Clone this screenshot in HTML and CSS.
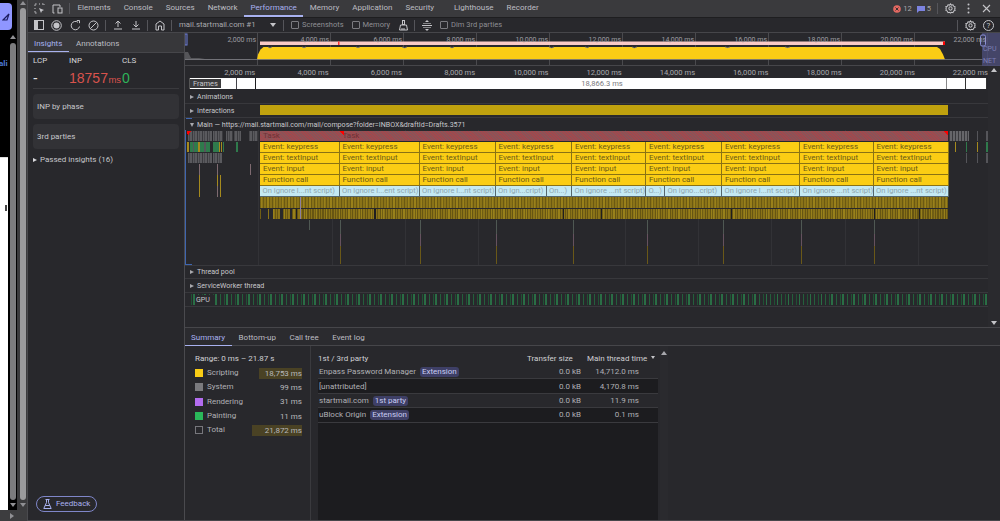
FILE: index.html
```html
<!DOCTYPE html>
<html lang="en">
<head>
<meta charset="utf-8">
<title>DevTools Performance</title>
<link rel="stylesheet" href="styles.css">
</head>
<body>
<div class="app">
  <aside class="strip">
    <div class="strip-main">
      <div class="pagecol">
        <div class="logo"><svg width="8" height="10" viewBox="0 0 8 10"><path d="M1 8 7 2 5 8Z" fill="none" stroke="#1c1c60" stroke-width="1.2"/></svg></div>
        <div class="pagedark"><span class="ali">ali</span></div>
        <div class="pagewhite"><i class="mark"></i></div>
      </div>
      <div class="innerbar"><i class="arrow-up"></i><div class="thumb"></div><i class="arrow-down"></i></div>
      <div class="outerbar"><i class="arrow-up"></i><div class="thumb"></div><i class="arrow-down"></i></div>
    </div>
    <div class="strip-foot"><i class="arrow-right"></i></div>
  </aside>

  <div class="devtools">
    <header class="tabbar">
      <svg class="ico first" width="11" height="11" viewBox="0 0 11 11" fill="none" stroke="#c4c4c8"><path d="M1 3V1h2M5 1h1M8 1h2v1M1 5v1M1 8v2h2" stroke-dasharray="1.5 .6"/><path d="M5 5 10 7 8 8 7 10Z" fill="#c4c4c8" stroke="none"/></svg>
      <svg class="ico dev" width="11" height="10" viewBox="0 0 11 10" fill="none" stroke="#c4c4c8"><path d="M2.500 9H1V1h7v2"/><rect x="6" y="4" width="4" height="5"/></svg>
      <span class="vr"></span>
      <nav class="tabs">
        <span class="tab">Elements</span><span class="tab">Console</span><span class="tab">Sources</span><span class="tab">Network</span><span class="tab active">Performance</span><span class="tab">Memory</span><span class="tab">Application</span><span class="tab">Security</span><span class="tab lh">Lighthouse</span><span class="tab">Recorder</span>
      </nav>
      <div class="status">
        <svg width="8" height="8" viewBox="0 0 8 8"><circle cx="4" cy="4" r="3.800" fill="#e46962"/><path d="M2.500 2.500l3 3m0-3l-3 3" stroke="#2a2a2c" stroke-width=".9"/></svg>
        <span class="cnt">12</span>
        <svg class="msg" width="8" height="8" viewBox="0 0 8 8"><path d="M0 1h8v5H2L0 8Z" fill="#7c83e0"/></svg>
        <span class="cnt">5</span>
        <span class="vr vr-status"></span>
        <svg class="gear" width="11" height="11" viewBox="0 0 12 12" fill="none" stroke="#c4c4c8" stroke-width="1.100"><circle cx="6" cy="6" r="1.800"/><path d="M6 1l1 1.300 1.700-.4.700 1.600 1.600.7-.4 1.700L11 6l-.4 1.100.4 1.100-1.600.7-.7 1.600-1.700-.4L6 11l-1-.9-1.700.4-.7-1.600-1.600-.7.4-1.700L1 6l.4-1.100L1 3.800l1.600-.3.700-1.600 1.700.4Z"/></svg>
        <svg class="dots" width="3" height="11" viewBox="0 0 3 11" fill="#c4c4c8"><circle cx="1.500" cy="1.500" r="1"/><circle cx="1.500" cy="5.500" r="1"/><circle cx="1.500" cy="9.500" r="1"/></svg>
        <svg class="close" width="9" height="9" viewBox="0 0 9 9" stroke="#c4c4c8" stroke-width="1.100"><path d="M1 1l7 7m0-7L1 8"/></svg>
      </div>
    </header>

    <div class="toolbar">
      <svg class="ti" width="10" height="10" viewBox="0 0 10 10" fill="none" stroke="#c4c4c8"><rect x=".5" y=".5" width="9" height="9"/><rect x="1" y="1" width="3" height="8" fill="#c4c4c8" stroke="none"/></svg>
      <svg class="ti ti8" width="11" height="11" viewBox="0 0 11 11"><circle cx="5.500" cy="5.500" r="4.800" fill="none" stroke="#c4c4c8"/><circle cx="5.500" cy="5.500" r="3" fill="#c4c4c8"/></svg>
      <svg class="ti" width="11" height="11" viewBox="0 0 11 11" fill="none" stroke="#c4c4c8"><path d="M9.500 6.500A4.200 4.200 0 1 1 8 2.300"/><path d="M6.800 .5H9.500V3.200" /></svg>
      <svg class="ti ti6" width="11" height="11" viewBox="0 0 11 11" fill="none" stroke="#c4c4c8"><circle cx="5.500" cy="5.500" r="4.500"/><path d="M2.300 8.700l6.400-6.400"/></svg>
      <span class="vr"></span>
      <svg class="ti ti8" width="10" height="10" viewBox="0 0 10 10" fill="none" stroke="#c4c4c8"><path d="M5 7V1M2.500 3.500 5 1l2.500 2.500M1 9h8"/></svg>
      <svg class="ti ti6" width="10" height="10" viewBox="0 0 10 10" fill="none" stroke="#c4c4c8"><path d="M5 1v6M2.500 4.500 5 7l2.500-2.500M1 9h8"/></svg>
      <span class="vr"></span>
      <svg class="ti ti6" width="10" height="11" viewBox="0 0 10 11" fill="none" stroke="#c4c4c8"><path d="M1 10V4l4-3 4 3v6H6.500V6h-3v4Z"/></svg>
      <span class="vr"></span>
      <span class="target">mail.startmail.com #1</span>
      <i class="caret"></i>
      <span class="vr"></span>
      <label class="chk shots"><i class="box"></i>Screenshots</label>
      <label class="chk"><i class="box"></i>Memory</label>
      <svg class="broom" width="11" height="11" viewBox="0 0 11 11" fill="none" stroke="#c4c4c8"><rect x="4.500" y=".5" width="2" height="4"/><path d="M2.500 5h6l1 5h-8ZM4 8v2M6 8v2"/></svg>
      <span class="vr"></span>
      <svg class="cap" width="10" height="11" viewBox="0 0 10 11" stroke="#c4c4c8" fill="#c4c4c8"><path d="M0 5.500h10" /><path d="M5 0 7 2H3ZM5 11 3 9h4Z" stroke="none"/><path d="M1 3.500h8M1 7.500h8" stroke-width=".6"/></svg>
      <label class="chk dim"><i class="box"></i>Dim 3rd parties</label>
      <div class="tool-right">
        <span class="vr"></span>
        <svg class="gear2" width="11" height="11" viewBox="0 0 12 12" fill="none" stroke="#c4c4c8" stroke-width="1.100"><circle cx="6" cy="6" r="1.800"/><path d="M6 1l1 1.300 1.700-.4.700 1.600 1.600.7-.4 1.700L11 6l-.4 1.100.4 1.100-1.600.7-.7 1.600-1.700-.4L6 11l-1-.9-1.700.4-.7-1.600-1.600-.7.4-1.700L1 6l.4-1.100L1 3.800l1.600-.3.700-1.600 1.700.4Z"/></svg>
        <span class="help">?</span>
      </div>
    </div>

    <div class="body">
      <aside class="sidebar">
        <div class="side-tabs"><span class="stab active">Insights</span><span class="stab">Annotations</span></div>
        <div class="metrics">
          <div class="metric m-lcp"><span class="mlabel">LCP</span><span class="mval dash">-</span></div>
          <div class="metric m-inp"><span class="mlabel">INP</span><span class="mval red">18757<small>ms</small></span></div>
          <div class="metric m-cls"><span class="mlabel">CLS</span><span class="mval green">0</span></div>
        </div>
        <div class="card">INP by phase</div>
        <div class="card">3rd parties</div>
        <div class="passed"><i class="tri"></i>Passed insights (16)</div>
        <div class="feedback-wrap">
          <span class="feedback"><svg width="9" height="10" viewBox="0 0 9 10" fill="none" stroke="#a8b1ef"><path d="M2.500 .5h4M3.500 .5v3L.8 9.500h7.400L5.500 3.500v-3M2.200 6.500h4.600"/></svg>Feedback</span>
        </div>
      </aside>

      <main class="main">
        <section class="timeline">
          <div class="timeline-scroll">
            <div class="overview">
              <div class="ov-labels">
                <span>2,000 ms</span><span>4,000 ms</span><span>6,000 ms</span><span>8,000 ms</span><span>10,000 ms</span><span>12,000 ms</span><span>14,000 ms</span><span>16,000 ms</span><span>18,000 ms</span><span>20,000 ms</span><span>22,000 ms</span>
              </div>
              <svg class="ov-art" width="815" height="33" viewBox="0 0 815 33">
                <path d="M0 19h3l3 6h8l6 1h45v1H0Z" fill="#555559"/>
                <path d="M72 26.500l1-5 2.500-5 3-2.500H752l3 2 3 5.500 2 5Z" fill="#facc15"/>
                <path d="M0 26.500H798" stroke="#7a7a80" stroke-width=".8"/>
                <rect x="75" y="8.500" width="685" height="3.500" fill="#f9c9c5"/>
                <rect x="153" y="8.500" width="1.500" height="3.500" fill="#f33"/>
                <rect x="758" y="8.500" width="2" height="3.500" fill="#f00"/>
                <path d="M83 14q2 2 4 0M117 14q2 1.500 4 0M171 14q2 1.500 4 0M217 14q3 2 5 0M265 14q2 2 4 0M364 14q3 2 5 0M400 14q3 1.500 4 0M447 14q2 2 5 0M540 14q3 1.500 5 0M600 14q3 1.500 5 0" stroke="#8a8a8e" fill="#33302a" stroke-width=".6"/>
                <rect x="0" y="1" width="2" height="11" fill="none" stroke="#6f7fd8"/>
                <rect x="797" y="0" width="18" height="33" fill="#4d4f7c" opacity=".75"/>
                <rect x="795.500" y="2" width="5" height="11" rx="1.500" fill="#3a3b55" stroke="#8a90d8"/>
              </svg>
              <span class="ov-cpu">CPU</span><span class="ov-net">NET</span>
            </div>
            <div class="ruler">
              <span>2,000 ms</span><span>4,000 ms</span><span>6,000 ms</span><span>8,000 ms</span><span>10,000 ms</span><span>12,000 ms</span><span>14,000 ms</span><span>16,000 ms</span><span>18,000 ms</span><span>20,000 ms</span><span>22,000 ms</span>
            </div>
            <div class="frames">
              <span class="frames-label">Frames</span>
              <div class="frames-mid">18,866.3 ms</div>
            </div>
            <div class="track t-anim"><i class="tri"></i>Animations</div>
            <div class="track t-int"><i class="tri"></i>Interactions<div class="int-bar"></div></div>
            <div class="track t-main"><i class="tri-d"></i>Main — https://mail.startmail.com/mail/compose?folder=INBOX&amp;draftId=Drafts.3571</div>
            <div class="flame">
              <div class="row r-task"><span class="c task w1">Task</span><span class="c task w2">Task</span></div>
              <div class="row">
                <span class="c y" style="width:79.5px">Event: keypress</span><span class="c y" style="width:80px">Event: keypress</span><span class="c y" style="width:76px">Event: keypress</span><span class="c y" style="width:76.500px">Event: keypress</span><span class="c y" style="width:74px">Event: keypress</span><span class="c y" style="width:76px">Event: keypress</span><span class="c y" style="width:78px">Event: keypress</span><span class="c y" style="width:73.500px">Event: keypress</span><span class="c y" style="width:75px">Event: keypress</span>
              </div>
              <div class="row">
                <span class="c y" style="width:79.5px">Event: textInput</span><span class="c y" style="width:80px">Event: textInput</span><span class="c y" style="width:76px">Event: textInput</span><span class="c y" style="width:76.500px">Event: textInput</span><span class="c y" style="width:74px">Event: textInput</span><span class="c y" style="width:76px">Event: textInput</span><span class="c y" style="width:78px">Event: textInput</span><span class="c y" style="width:73.500px">Event: textInput</span><span class="c y" style="width:75px">Event: textInput</span>
              </div>
              <div class="row">
                <span class="c y" style="width:79.5px">Event: input</span><span class="c y" style="width:80px">Event: input</span><span class="c y" style="width:76px">Event: input</span><span class="c y" style="width:76.500px">Event: input</span><span class="c y" style="width:74px">Event: input</span><span class="c y" style="width:76px">Event: input</span><span class="c y" style="width:78px">Event: input</span><span class="c y" style="width:73.500px">Event: input</span><span class="c y" style="width:75px">Event: input</span>
              </div>
              <div class="row">
                <span class="c y" style="width:79.5px">Function call</span><span class="c y" style="width:80px">Function call</span><span class="c y" style="width:76px">Function call</span><span class="c y" style="width:76.500px">Function call</span><span class="c y" style="width:74px">Function call</span><span class="c y" style="width:76px">Function call</span><span class="c y" style="width:78px">Function call</span><span class="c y" style="width:73.500px">Function call</span><span class="c y" style="width:75px">Function call</span>
              </div>
              <div class="row">
                <span class="c b" style="width:79.5px">On ignore l...nt script)</span><span class="c b" style="width:80px">On ignore l...ent script)</span><span class="c b" style="width:76px">On ignore l...nt script)</span><span class="c b" style="width:51px">On ign...cript)</span><span class="c b" style="width:25.500px">On...)</span><span class="c b" style="width:74px">On ignore ...nt script)</span><span class="c b" style="width:19px">O...)</span><span class="c b" style="width:57px">On igno...cript)</span><span class="c b" style="width:78px">On ignore l...nt script)</span><span class="c b" style="width:73.500px">On ignore ...nt script)</span><span class="c b" style="width:75px">On ignore ...nt script)</span>
              </div>
              <div class="row r-stripe s1"></div>
              <div class="row r-stripe s2"></div>
              <svg class="flame-art" width="803" height="134" viewBox="0 0 803 134" shape-rendering="crispEdges">
                <defs>
                  <pattern id="noise" width="5" height="10" patternUnits="userSpaceOnUse"><rect width="5" height="10" fill="#5a5a5e"/><rect x="1" width="1" height="10" fill="#3a3a3e"/><rect x="3" width="1" height="10" fill="#47474b"/></pattern>
                  <pattern id="tail" width="3" height="10" patternUnits="userSpaceOnUse"><rect width="3" height="10" fill="#66666a"/><rect x="1" width="1" height="10" fill="#3a3a3e"/></pattern>
                </defs>
                <g fill="url(#noise)"><rect x="2" y="0" width="24" height="10"/><rect x="27" y="0" width="10" height="10"/><rect x="40" y="0" width="7" height="10"/><rect x="48" y="0" width="7" height="10"/><rect x="63" y="0" width="9" height="10"/><rect x="2" y="22" width="24" height="10"/><rect x="27" y="22" width="9" height="10"/></g>
                <g fill="url(#tail)"><rect x="763" y="0" width="20" height="10"/></g>
                <g fill="#55555a"><rect x="791" y="0" width="1" height="10"/><rect x="800" y="0" width="2" height="10"/><rect x="791" y="22" width="1" height="10"/><rect x="800" y="22" width="2" height="10"/><rect x="780" y="22" width="1" height="10"/></g>
                <path d="M1 0h4L2 5Z" fill="#f00"/>
                <path d="M153 0h5l0 5Z" fill="#f00"/>
                <path d="M757 0h5v5Z" fill="#f00"/>
                <g fill="#2f7a4c"><rect x="4" y="11" width="20" height="10"/><rect x="27" y="11" width="6" height="10"/><rect x="50" y="11" width="2" height="10"/><rect x="37" y="11" width="1" height="10"/><rect x="800" y="11" width="2" height="10"/><rect x="780" y="11" width="1" height="10"/></g>
                <g fill="#55555a"><rect x="7" y="11" width="1" height="10"/><rect x="12" y="11" width="1" height="10"/><rect x="18" y="11" width="2" height="10"/></g>
                <g fill="#a58a1e"><rect x="1" y="11" width="2" height="10"/><rect x="12" y="11" width="2" height="10"/><rect x="33" y="11" width="1" height="10"/><rect x="35" y="11" width="1" height="10"/><rect x="13" y="44" width="1" height="22"/><rect x="31" y="44" width="1" height="11"/><rect x="34" y="44" width="1" height="22"/><rect x="769" y="11" width="1" height="10"/><rect x="791" y="11" width="1" height="10"/></g>
                <g fill="#7e6a70"><rect x="13" y="33" width="1" height="11"/><rect x="31" y="33" width="1" height="11"/><rect x="64" y="33" width="1" height="11"/><rect x="31" y="55" width="1" height="11"/></g>
                <g fill="#1e1e20"><rect x="188" y="78" width="2" height="10"/><rect x="377" y="78" width="1" height="10"/><rect x="415" y="78" width="1" height="10"/><rect x="545" y="78" width="1" height="10"/><rect x="688" y="78" width="1" height="10"/><rect x="733" y="78" width="1" height="10"/><rect x="110" y="78" width="1" height="10"/></g>
                <g fill="#28282c"><rect x="75" y="78" width="7" height="10"/><rect x="83" y="78" width="4" height="10"/><rect x="94" y="78" width="3" height="10"/><rect x="104" y="78" width="2" height="10"/></g>
                <g fill="#8c7fa0"><rect x="114" y="66" width="1" height="22"/></g>
                <g id="ticks">
                  <g fill="#4f5853"><rect x="154" y="89" width="1" height="14"/><rect x="234" y="89" width="1" height="14"/><rect x="310" y="89" width="1" height="14"/><rect x="387" y="89" width="1" height="14"/><rect x="461" y="89" width="1" height="14"/><rect x="537" y="89" width="1" height="14"/><rect x="615" y="89" width="1" height="14"/><rect x="688" y="89" width="1" height="14"/><rect x="123" y="89" width="1" height="10"/></g>
                  <g fill="#66525f"><rect x="154" y="103" width="1" height="12"/><rect x="234" y="103" width="1" height="12"/><rect x="310" y="103" width="1" height="12"/><rect x="387" y="103" width="1" height="12"/><rect x="461" y="103" width="1" height="12"/><rect x="537" y="103" width="1" height="12"/><rect x="615" y="103" width="1" height="12"/><rect x="688" y="103" width="1" height="12"/></g>
                  <g fill="#6a5818"><rect x="154" y="115" width="1" height="18"/><rect x="234" y="115" width="1" height="18"/><rect x="310" y="115" width="1" height="18"/><rect x="387" y="115" width="1" height="18"/><rect x="461" y="115" width="1" height="18"/><rect x="537" y="115" width="1" height="18"/><rect x="615" y="115" width="1" height="18"/><rect x="688" y="115" width="1" height="18"/></g>
                </g>
              </svg>
            </div>
            <div class="track t-pool"><i class="tri"></i>Thread pool</div>
            <div class="track t-sw"><i class="tri"></i>ServiceWorker thread</div>
            <div class="track t-gpu"><span class="gpu-label">GPU</span></div>
          </div>
          <div class="vscroll"><i class="arrow-up"></i><i class="arrow-down"></i></div>
        </section>

        <section class="details">
          <div class="dtabs"><span class="dtab active">Summary</span><span class="dtab">Bottom-up</span><span class="dtab">Call tree</span><span class="dtab">Event log</span></div>
          <div class="dbody">
            <div class="summary">
              <div class="range">Range: 0 ms – 21.87 s</div>
              <div class="sline"><i class="sw sw-y"></i><span>Scripting</span><b class="sv bar1">18,753 ms</b></div>
              <div class="sline"><i class="sw sw-g"></i><span>System</span><b class="sv">99 ms</b></div>
              <div class="sline"><i class="sw sw-p"></i><span>Rendering</span><b class="sv">31 ms</b></div>
              <div class="sline"><i class="sw sw-n"></i><span>Painting</span><b class="sv">11 ms</b></div>
              <div class="sline"><i class="sw sw-t"></i><span>Total</span><b class="sv bar2">21,872 ms</b></div>
            </div>
            <div class="tablewrap">
              <div class="thead"><span class="c1">1st / 3rd party</span><span class="c2">Transfer size</span><span class="c3">Main thread time<i class="caret small"></i></span></div>
              <div class="trow"><span class="c1">Enpass Password Manager <em>Extension</em></span><span class="c2">0.0 kB</span><span class="c3">14,712.0 ms</span></div>
              <div class="trow"><span class="c1">[unattributed]</span><span class="c2">0.0 kB</span><span class="c3">4,170.8 ms</span></div>
              <div class="trow"><span class="c1">startmail.com <em>1st party</em></span><span class="c2">0.0 kB</span><span class="c3">11.9 ms</span></div>
              <div class="trow"><span class="c1">uBlock Origin <em>Extension</em></span><span class="c2">0.0 kB</span><span class="c3">0.1 ms</span></div>
            </div>
            <div class="tscroll"><i class="arrow-up"></i></div>
          </div>
        </section>
      </main>
    </div>
  </div>
</div>
</body>
</html>
```

FILE: styles.css
```css
* { box-sizing: border-box; }
html, body { margin: 0; height: 100%; overflow: hidden; background: #28282b; }
body { font: 8px/10px Roboto, "Noto Sans", sans-serif; color: #c7c7cb; }
svg { display: block; flex: none; }
i { display: block; font-style: normal; }
em { font-style: normal; }

.app { display: flex; width: 1000px; height: 521px; }

/* Left page remnant */
.strip { width: 28px; flex: none; display: flex; flex-direction: column; border-right: 1px solid #4a4a4e; background: #3b3b3d; }
.strip-main { flex: 1; display: flex; min-height: 0; }
.strip-foot { height: 11px; background: #3d3d3f; display: flex; align-items: center; padding-left: 10px; }
.pagecol { width: 8px; display: flex; flex-direction: column; background: #000; }
.logo { width: 12px; height: 27px; margin-top: 3px; background: #8f96ff; border-radius: 0 4px 4px 0; display: flex; align-items: center; justify-content: center; position: relative; z-index: 1; }
.pagedark { height: 127px; padding-top: 29px; overflow: visible; }
.ali { color: #4d7bd6; font-weight: 700; font-size: 8px; margin-left: -1px; }
.pagewhite { flex: 1; background: #fff; border-top: 1px solid #ddd; padding: 47px 0 0 5px; }
.mark { width: 2px; height: 6px; background: #444; }
.innerbar { width: 9px; background: #000; display: flex; flex-direction: column; align-items: center; padding: 35px 0 3px; margin-right: 2px; position: relative; }
.innerbar .thumb { flex: 1; width: 6px; margin: 4px 0 3px; background: #7c7c7e; border-radius: 3px; }
.outerbar { width: 8px; display: flex; flex-direction: column; align-items: center; padding: 1px 0 3px; }
.outerbar .thumb { flex: 1; width: 6px; margin: 3px 0; background: #9a9a9c; border-radius: 3px; }
.arrow-up { width: 0; height: 0; border: 3px solid transparent; border-top: 0; border-bottom: 4px solid #909094; flex: none; }
.arrow-down { width: 0; height: 0; border: 3px solid transparent; border-bottom: 0; border-top: 4px solid #909094; flex: none; }
.arrow-right { width: 0; height: 0; border: 3px solid transparent; border-right: 0; border-left: 4px solid #909094; }

/* DevTools shell */
.devtools { flex: 1; min-width: 0; display: flex; flex-direction: column; border-bottom: 1px solid #46464a; }
.tabbar { height: 17px; flex: none; background: #3a3a3d; display: flex; align-items: center; padding-left: 6px; }
.ico.dev { margin-left: 7px; }
.vr { width: 1px; height: 11px; background: #55555a; flex: none; }
.tabbar > .vr { margin: 0 1px 0 6px; }
.tabs { display: flex; align-self: stretch; }
.tab { padding: 3px 6.500px 0; height: 17px; color: #bdbdc2; white-space: nowrap; border-bottom: 2px solid transparent; }
.tab.active { color: #a8b1ef; border-bottom-color: #a8b1ef; }
.tab.lh { margin-left: 7px; }
.status { margin-left: auto; display: flex; align-items: center; padding-right: 9px; }
.cnt { margin-left: 2px; color: #a8a8ad; font-size: 7.500px; }
.msg { margin-left: 5px; }
.status .vr-status { margin-left: 6px; }
.gear { margin-left: 7px; }
.dots { margin-left: 11px; }
.close { margin-left: 12px; }

.toolbar { height: 16px; flex: none; background: #28282c; border-top: 1px solid #1e1e20; border-bottom: 1px solid #46464a; display: flex; align-items: center; padding-left: 6px; }
.ti { margin-right: 7px; }
.ti8 { margin-right: 8px; }
.ti6 { margin-right: 6px; }
.toolbar > .vr { margin-right: 7px; margin-left: 0; }
.target { color: #a8a8ad; width: 91px; white-space: nowrap; font-size: 7.800px; }
.caret { width: 0; height: 0; border: 3px solid transparent; border-bottom: 0; border-top: 4px solid #c4c4c8; flex: none; margin-right: 7px; }
.caret.small { display: inline-block; border-width: 2.500px; border-bottom: 0; border-top-width: 3px; margin: 0 0 1px 3px; border-top-color: #c4c4c8; vertical-align: middle; }
.chk { display: flex; align-items: center; color: #8e8e93; white-space: nowrap; margin-right: 8px; font-size: 7.500px; }
.box { width: 8px; height: 8px; border: 1px solid #7a7a7f; border-radius: 1px; margin-right: 3px; }
.broom { margin-right: 5px; }
.cap { margin-right: 8px; }
.dim { margin-right: 0; }
.tool-right { margin-left: auto; display: flex; align-items: center; padding-right: 6px; }
.gear2 { margin-left: 7px; }
.help { width: 11px; height: 11px; border: 1px solid #c4c4c8; border-radius: 50%; margin-left: 7px; font-size: 8px; line-height: 9px; text-align: center; color: #c4c4c8; }

.body { flex: 1; display: flex; min-height: 0; }

/* Sidebar */
.sidebar { width: 157px; flex: none; border-right: 1px solid #4a4a4e; background: #28282c; display: flex; flex-direction: column; }
.side-tabs { height: 20px; background: #37373a; display: flex; border-bottom: 1px solid #46464a; }
.stab { padding: 6px 7px 0 6px; height: 19px; color: #bdbdc2; white-space: nowrap; margin-right: 1px; }
.stab.active { color: #a8b1ef; border-bottom: 1px solid #a8b1ef; width: 41px; padding-left: 6px; margin-right: 0; }
.stab + .stab { padding-left: 7px; }
.metrics { display: flex; height: 36px; margin: 0 5px; border-bottom: 1px solid #3a3a3e; padding-top: 3px; }
.metric { display: flex; flex-direction: column; }
.m-lcp { width: 36px; padding-left: 0; }
.m-inp { width: 53px; }
.mlabel { color: #d6d6da; height: 10px; font-size: 8px; }
.mval { margin-top: 5px; font: 14px/15px "Liberation Sans", sans-serif; white-space: nowrap; }
.mval small { font-size: 9.500px; margin-left: .5px; }
.dash { color: #e0e0e4; }
.red { color: #d9534c; }
.green { color: #2fb35a; }
.card { height: 25px; margin: 5px 5px 0; padding-left: 4px; line-height: 25px; border-radius: 4px; background: #323236; color: #c7c7cb; }
.card + .card { margin-top: 5px; }
.passed { display: flex; align-items: center; margin: 6px 0 0 5px; height: 10px; color: #c7c7cb; }
.tri { width: 0; height: 0; border: 2.500px solid transparent; border-right: 0; border-left: 4px solid #a8a8ad; margin-right: 3px; flex: none; }
.passed .tri { border-left-color: #d8d8dc; margin-right: 3px; }
.tri-d { width: 0; height: 0; border: 2.500px solid transparent; border-bottom: 0; border-top: 4px solid #a8a8ad; margin-right: 3px; flex: none; }
.feedback-wrap { margin-top: auto; padding: 0 0 8px 8px; }
.feedback { display: inline-flex; align-items: center; height: 16px; width: 61px; padding-left: 6px; border: 1px solid #7f86c9; border-radius: 8px; color: #a8b1ef; gap: 4px; }

/* Main column */
.main { flex: 1; min-width: 0; display: flex; flex-direction: column; background: #28282c; }
.timeline { height: 295px; flex: none; display: flex; position: relative; border-bottom: 1px solid #46464a; }
.timeline-scroll { flex: 1; min-width: 0; display: flex; flex-direction: column; }
.vscroll { position: absolute; right: 0; top: 33px; bottom: 0; width: 12px; display: flex; flex-direction: column; justify-content: space-between; align-items: center; padding: 3px 0 2px; background: #2a2a2e; }
.vscroll .arrow-up { border-bottom-color: #c4c4c8; margin-top: -1px; }
.vscroll .arrow-down { border-top-color: #c4c4c8; }

.overview { height: 33px; flex: none; position: relative; border-bottom: 1px solid #46464a;
  background: repeating-linear-gradient(90deg, transparent 0 72px, #4a4a4e 72px 73px); }
.ov-labels { display: flex; position: relative; z-index: 1; }
.ov-labels span { width: 73px; flex: none; text-align: right; padding: 2px 2px 0 0; font-size: 7px; color: #9c9ca1; white-space: nowrap; }
.ov-art { position: absolute; left: 0; top: 0; }
.ov-cpu, .ov-net { position: absolute; left: 798px; color: #7d7fb5; font-size: 7px; }
.ov-cpu { top: 11px; }
.ov-net { top: 23px; }

.ruler { height: 12px; flex: none; display: flex; background: #28282c; padding-top: 1px; }
.ruler span { width: 73.300px; flex: none; text-align: right; color: #a8a8ad; padding-right: 3px; line-height: 11px; white-space: nowrap; overflow: hidden; font-size: 7.600px; }
.ruler span:last-child { width: 70px; padding-right: 0; }

.frames { height: 11px; flex: none; position: relative; margin-right: 13px; margin-left: 4px;
  background: linear-gradient(90deg, #555 0 1px, #fff 1px 47px, #44444a 47px 48px, #fff 48px 66px, #1e1e20 66px 67px, #fff 67px 757px, #888 757px 758px, #fff 758px 776px, #333 776px 777px, #fff 777px 797px, #333 797px); }
.frames-label { position: absolute; left: 1px; top: 1px; height: 9px; padding: 0 2px 0 3px; line-height: 9px; background: #3c3c3e; color: #c7c7cb; width: 31px; font-size: 7.500px; }
.frames-mid { color: #7a7a7e; text-align: center; line-height: 11px; padding-left: 28px; font-size: 7.600px; }

.track { display: flex; align-items: center; padding-left: 5px; border-bottom: 1px solid #38383c; position: relative; flex: none; color: #c7c7cb; white-space: nowrap; font-size: 7.100px; }
.t-anim { height: 15px; padding-top: 1px; }
.t-int { height: 14px; padding-top: 1px; }
.t-main { height: 12px; border-bottom: 0; padding-top: 2px; }
.t-pool { height: 14px; border-top: 1px solid #38383c; }
.t-sw { height: 14px; }
.t-gpu { height: 14px; }
.int-bar { position: absolute; left: 75px; width: 688px; top: 1px; height: 10px; background: #c0a20e; }

.flame { height: 135px; flex: none; position: relative; padding-left: 74px; padding-top: 1px; border-left: 1px solid #3f66b0;
  background: repeating-linear-gradient(90deg, transparent 0 72.300px, #323236 72.300px 73.300px); }
.flame::before, .flame::after { content: ""; position: absolute; left: 0; width: 6px; height: 1px; background: #3f66b0; }
.flame::before { top: -12px; }
.flame::after { bottom: 0; }
.row { display: flex; height: 11px; width: 688px; }
.c { flex: none; height: 11px; padding-left: 3px; line-height: 10px; white-space: nowrap; overflow: hidden; border-right: 1px solid #8a7214; border-bottom: 1px solid #8a7214; }
.y { background: #fbcd14; color: #6b5a14; }
.b { background: #c4e9f3; color: #8fa6ae; border-color: #55666c; font-size: 7.600px; padding-left: 2.500px; }
.task { height: 11px; border: 0; border-bottom: 1px solid #28282c; color: #6e3236; background: repeating-linear-gradient(45deg, #a5474c 0 1px, #86565a 1px 2px); }
.w1 { width: 79.500px; border-right: 0; }
.w2 { width: 608.500px; }
.r-stripe { height: 11px; background-color: #8a7318; }
.s1 { background-image: repeating-linear-gradient(90deg, rgba(60,50,10,.4) 0 1px, transparent 1px 3px), repeating-linear-gradient(90deg, rgba(190,160,30,.3) 0 2px, transparent 2px 7px); }
.s2 { background-image: repeating-linear-gradient(90deg, rgba(50,40,10,.4) 0 1px, transparent 1px 2.500px), repeating-linear-gradient(90deg, rgba(170,145,30,.45) 0 3px, transparent 3px 11px); border-top: 1px solid #28282c; }
.flame-art { position: absolute; left: 0; top: 1px; pointer-events: none; }

.t-gpu { background: repeating-linear-gradient(90deg, #24603c 0 1px, transparent 1px 4px, #1f5234 4px 5px, transparent 5px 6.500px, #2a6e45 6.500px 8px, transparent 8px 11px) 2px 0 / 800px 100% no-repeat; background-clip: content-box; padding-top: 1px; padding-bottom: 1px; }
.gpu-label { background: #28282c; padding: 0 4px 0 0; margin-left: 6px; }

/* Details */
.details { flex: 1; min-height: 0; display: flex; flex-direction: column; }
.dtabs { height: 18px; flex: none; display: flex; background: #2b2b2f; border-bottom: 1px solid #46464a; }
.dtab { padding: 5px 7px 0 6.500px; height: 18px; color: #bdbdc2; white-space: nowrap; }
.dtab.active { color: #a8b1ef; border-bottom: 1px solid #a8b1ef; padding-left: 6px; }
.dbody { flex: 1; min-height: 0; display: flex; }
.summary { width: 126px; flex: none; border-right: 1px solid #3a3a3e; padding: 6px 8px 0 10px; }
.range { height: 14px; line-height: 14px; color: #d0d0d4; }
.sline { display: flex; align-items: center; height: 14.300px; color: #b0b0b5; }
.sw { width: 8px; height: 8px; margin-right: 4px; flex: none; }
.sw-y { background: #f9cc15; }
.sw-g { background: #7a7a7e; }
.sw-p { background: #b36cf0; }
.sw-n { background: #2ab85a; }
.sw-t { border: 1px solid #77777c; }
.sv { margin-left: auto; font-weight: 400; color: #b8b8bc; text-align: right; height: 11px; line-height: 11px; }
.bar1 { width: 43px; background: #4a4224; }
.bar2 { width: 50px; background: #4a4224; }
.tablewrap { width: 340px; flex: none; margin-left: 7px; background: #1c1c1f; }
.thead, .trow { display: flex; align-items: center; height: 14.400px; }
.thead { height: 19px; background: #28282c; color: #d0d0d4; padding-top: 6px; }
.trow { border-bottom: 1px solid #3a3a3e; color: #b0b0b5; background: #1c1c1f; padding-top: 1px; }
.trow:nth-child(even) { background: #28282c; }
.c1 { flex: 1; padding-left: 1px; white-space: nowrap; }
.thead .c1 { padding-left: 0; }
.c2 { width: 60px; text-align: right; }
.c3 { width: 77px; text-align: right; padding-right: 19px; white-space: nowrap; }
.thead .c2 { text-align: left; }
.thead .c3 { width: 71px; padding-right: 0; text-align: left; }
.caret.small { margin-left: 4px; }
.c1 em { display: inline-block; height: 10px; line-height: 10px; padding: 0 2px; margin-left: 2px; background: #3e3f66; border-radius: 3px; color: #c9cdf2; }
.tscroll { width: 8px; margin-left: 2px; background: #2a2a2e; padding: 5px 0 0 1px; }
.tscroll .arrow-up { border-bottom-color: #a8a8ad; }
```
